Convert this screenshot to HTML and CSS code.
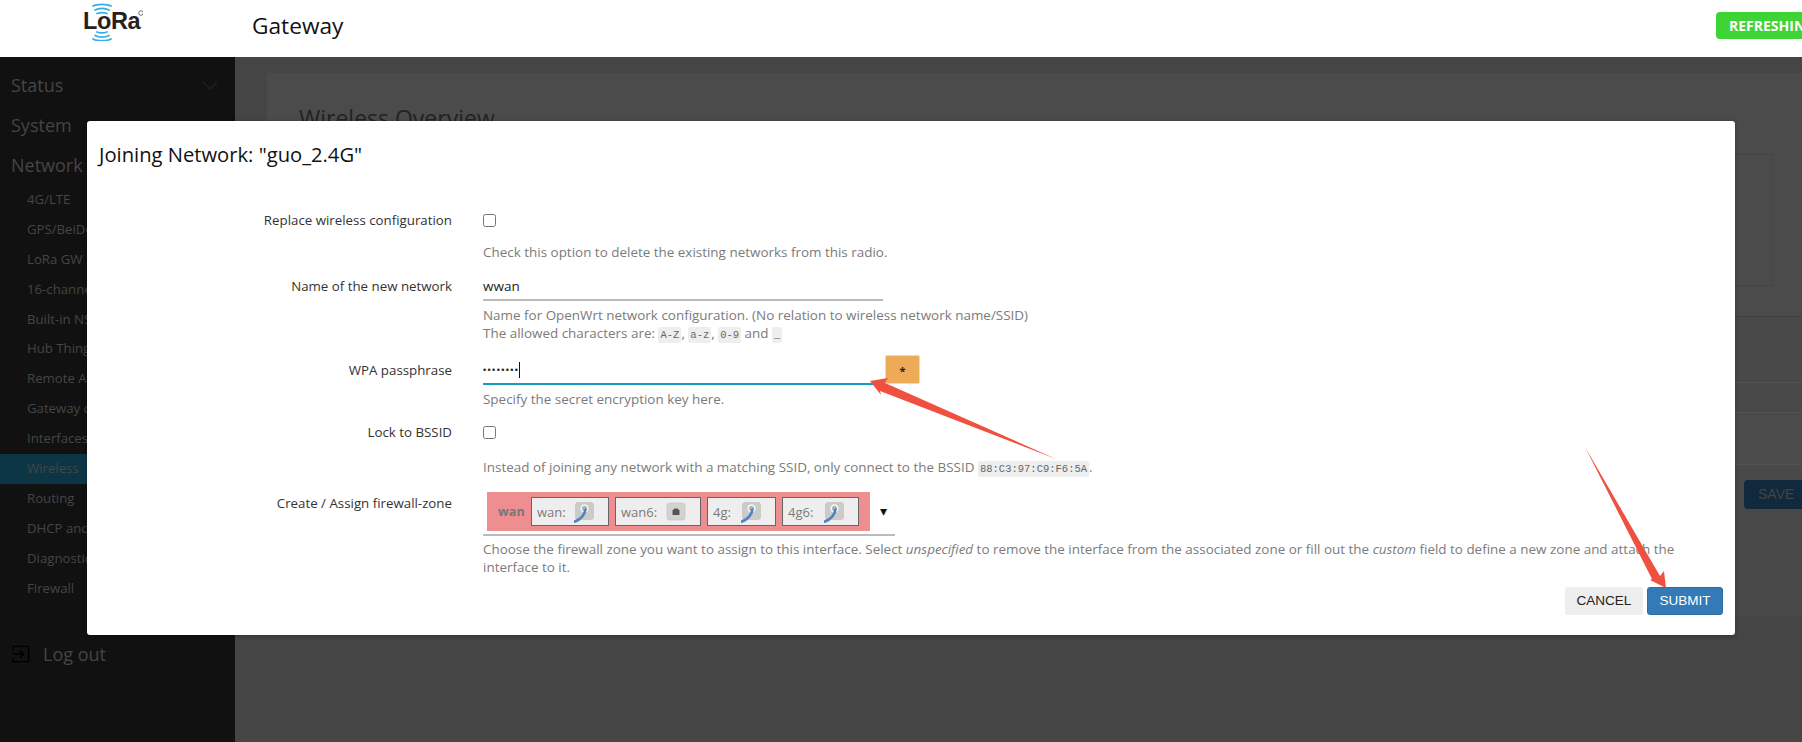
FILE: index.html
```html
<!DOCTYPE html>
<html lang="en">
<head>
<meta charset="utf-8">
<title>Gateway - Wireless</title>
<link rel="stylesheet" href="styles.css">
</head>
<body>
<svg class="defs" width="0" height="0" aria-hidden="true">
  <defs>
    <symbol id="wifi-icon" viewBox="0 0 20 21">
      <rect x="1.5" y=".5" width="18" height="17" rx="2.5" fill="#cbcbc9" stroke="#bdbdbb" stroke-width=".6"/>
      <circle cx="10.5" cy="6.5" r="3.4" fill="none" stroke="#f6f6f6" stroke-width="1.5"/>
      <circle cx="10.5" cy="6.5" r="1.6" fill="none" stroke="#8a8a8a" stroke-width=".8"/>
      <path d="M11.5 6.5C11.5 12 7 17.5 0 20" fill="none" stroke="#4d83c4" stroke-width="2.6"/>
    </symbol>
    <symbol id="eth-icon" viewBox="0 0 20 21">
      <rect x="1" y="1" width="18" height="17" rx="2.5" fill="#d2d2d0" stroke="#c4c4c2" stroke-width=".6"/>
      <path d="M6.5 13V8.5L8.5 6.5H11.5L13.5 8.5V13Z" fill="#555"/>
    </symbol>
  </defs>
</svg>

<header class="topbar">
  <div class="logo">
    <svg class="logo-waves" viewBox="0 0 60 38" width="60" height="38" aria-hidden="true">
      <g fill="none" stroke="#38aee8" stroke-width="1.8" stroke-linecap="round">
        <path d="M10 3C14 .7 24 .7 28 3"/>
        <path d="M12 7C16 5 22 5 26 7"/>
        <path d="M14 10.5C17 9.4 21 9.4 24 10.5"/>
        <path d="M14 29C17 30.1 21 30.1 24 29"/>
        <path d="M12 32.5C16 34.5 22 34.5 26 32.5"/>
        <path d="M10 36C14 38.3 24 38.3 28 36"/>
      </g>
      <circle cx="58" cy="10" r="2.3" fill="none" stroke="#666" stroke-width=".9"/>
    </svg>
    <span class="logo-text">LoRa</span>
  </div>
  <div class="brand">Gateway</div>
  <div class="refresh">REFRESHING</div>
</header>

<div class="shell">
  <nav class="sidebar">
    <div class="nav-head">Status
      <svg class="chev" viewBox="0 0 16 10" width="16" height="10" aria-hidden="true"><path d="M1 1L8 8L15 1" fill="none" stroke="#222" stroke-width="1.2"/></svg>
    </div>
    <div class="nav-head">System</div>
    <div class="nav-head">Network</div>
    <ul class="nav-list">
      <li class="nav-item">4G/LTE</li>
      <li class="nav-item">GPS/BeiDou</li>
      <li class="nav-item">LoRa GW</li>
      <li class="nav-item">16-channel</li>
      <li class="nav-item">Built-in NS</li>
      <li class="nav-item">Hub Things</li>
      <li class="nav-item">Remote Access</li>
      <li class="nav-item">Gateway config</li>
      <li class="nav-item">Interfaces</li>
      <li class="nav-item active">Wireless</li>
      <li class="nav-item">Routing</li>
      <li class="nav-item">DHCP and DNS</li>
      <li class="nav-item">Diagnostics</li>
      <li class="nav-item">Firewall</li>
    </ul>
    <div class="logout">
      <svg viewBox="0 0 20 20" width="18" height="18" aria-hidden="true"><path d="M1 1.5H18.5V18.5H1V14M1 6V1.5M1 10H13M9 6L13 10L9 14" fill="none" stroke="#000" stroke-width="1.6"/></svg>
      <span>Log out</span>
    </div>
  </nav>

  <main class="main">
    <section class="card">
      <h2 class="card-title">Wireless Overview</h2>
      <div class="card-box"></div>
    </section>
    <section class="lower">
      <div class="lower-row one"></div>
      <div class="lower-row two"></div>
      <div class="lower-row three"></div>
      <div class="save-row"><span class="save">SAVE</span></div>
    </section>
  </main>
</div>

<div class="modal">
  <h3 class="modal-title">Joining Network: "guo_2.4G"</h3>

  <div class="row r1">
    <div class="label">Replace wireless configuration</div>
    <div class="field">
      <div class="control"><span class="check"></span></div>
      <div class="help tall">Check this option to delete the existing networks from this radio.</div>
    </div>
  </div>

  <div class="row r2">
    <div class="label">Name of the new network</div>
    <div class="field">
      <div class="control text">wwan</div>
      <div class="help">Name for OpenWrt network configuration. (No relation to wireless network name/SSID)<br>The allowed characters are: <code>A-Z</code>, <code>a-z</code>, <code>0-9</code> and <code>_</code></div>
    </div>
  </div>

  <div class="row r3">
    <div class="label">WPA passphrase</div>
    <div class="field">
      <div class="pass-line">
        <div class="control text focus"><span class="dots">••••••••</span><span class="caret"></span></div>
        <span class="star">*</span>
      </div>
      <div class="help">Specify the secret encryption key here.</div>
    </div>
  </div>

  <div class="row r4">
    <div class="label">Lock to BSSID</div>
    <div class="field">
      <div class="control"><span class="check"></span></div>
      <div class="help tall">Instead of joining any network with a matching SSID, only connect to the BSSID <code>88:C3:97:C9:F6:5A</code>.</div>
    </div>
  </div>

  <div class="row r5">
    <div class="label">Create / Assign firewall-zone</div>
    <div class="field">
      <div class="zone-select">
        <div class="zone">
          <b class="zone-name">wan</b>
          <span class="iface w78">wan: <svg class="if-icon" aria-hidden="true"><use href="#wifi-icon"/></svg></span>
          <span class="iface w86">wan6: <svg class="if-icon" aria-hidden="true"><use href="#eth-icon"/></svg></span>
          <span class="iface w69">4g: <svg class="if-icon" aria-hidden="true"><use href="#wifi-icon"/></svg></span>
          <span class="iface w77">4g6: <svg class="if-icon" aria-hidden="true"><use href="#wifi-icon"/></svg></span>
        </div>
        <span class="drop">▾</span>
      </div>
      <div class="help zone-help">Choose the firewall zone you want to assign to this interface. Select <em>unspecified</em> to remove the interface from the associated zone or fill out the <em>custom</em> field to define a new zone and attach the interface to it.</div>
    </div>
  </div>

  <div class="modal-foot">
    <span class="btn cancel">CANCEL</span>
    <span class="btn submit">SUBMIT</span>
  </div>
</div>

<svg class="arrows" viewBox="0 0 1802 742" width="1802" height="742" aria-hidden="true">
  <polygon fill="#f0503f" points="1056,459 885,383 888,378 870,381 881,395 880,391"/>
  <polygon fill="#f0503f" points="1585,447 1660,576 1664,571 1666,588 1650,580 1652,579"/>
</svg>
</body>
</html>
```
FILE: styles.css
```css
* { box-sizing: border-box; }
html, body { margin: 0; height: 742px; overflow: hidden; }
body {
  font-family: "Open Sans", "Noto Sans", sans-serif;
  background: #454545;
  color: #222;
  position: relative;
}
.defs { position: absolute; }

/* Header */
.topbar {
  height: 57px;
  background: #fff;
  display: flex;
  align-items: center;
  padding-left: 83px;
  overflow: hidden;
}
.logo { position: relative; width: 169px; height: 57px; }
.logo-waves { position: absolute; left: 0; top: 3px; }
.logo-text {
  position: absolute;
  left: 0;
  top: 6px;
  font-family: "Liberation Sans", sans-serif;
  font-weight: 700;
  font-size: 23.5px;
  line-height: 30px;
  color: #2a1f1d;
  letter-spacing: -.4px;
}
.brand { font-size: 22.7px; color: #111; flex: 1; margin-top: -6px; }
.refresh {
  flex: none;
  width: 86px;
  height: 27px;
  margin-top: -6px;
  padding-left: 13px;
  background: #3fd435;
  border-radius: 4px 0 0 4px;
  color: #fff;
  font-weight: 700;
  font-size: 14px;
  line-height: 27px;
  white-space: nowrap;
  overflow: hidden;
}

/* Shell */
.shell { display: flex; height: 685px; }
.sidebar {
  width: 235px;
  flex: none;
  background: #111;
  color: #454545;
  padding-top: 8px;
}
.nav-head {
  height: 40px;
  line-height: 40px;
  padding-left: 11px;
  font-size: 18px;
  position: relative;
}
.chev { position: absolute; left: 202px; top: 16px; }
.nav-list { list-style: none; margin: 0; padding: 0; }
.nav-item {
  height: 29.9px;
  line-height: 29.9px;
  padding-left: 27px;
  font-size: 13.2px;
  white-space: nowrap;
}
.nav-item.active { background: #0c3546; }
.logout {
  display: flex;
  align-items: center;
  gap: 13px;
  margin-top: 39px;
  padding-left: 12px;
  font-size: 18px;
}

/* Dimmed page content */
.main { flex: 1; padding: 16px 0 0 32px; min-width: 0; }
.card { height: 243px; background: #4b4b4b; padding: 30px 29px 0 32px; }
.card-title { margin: 0; font-size: 23px; font-weight: 400; color: #222; line-height: 30px; white-space: nowrap; }
.card-box { margin-top: 21px; height: 132px; border: 1px solid #444; }
.lower { height: 300px; background: #484848; border-top: 1px solid #3f3f3f; }
.lower-row { border-bottom: 1px solid #525252; }
.lower-row.one { height: 66px; }
.lower-row.two { height: 30px; }
.lower-row.three { height: 52px; background: #4b4b4b; }
.save-row { display: flex; justify-content: flex-end; padding-top: 15px; }
.save {
  width: 58px;
  height: 29px;
  background: #10293d;
  color: #444;
  border-radius: 4px 0 0 4px;
  font-family: "Liberation Sans", sans-serif;
  font-size: 14px;
  line-height: 29px;
  padding-left: 14px;
}

/* Modal */
.modal {
  position: absolute;
  left: 87px;
  top: 121px;
  width: 1648px;
  height: 514px;
  background: #fff;
  border-radius: 3px;
  box-shadow: 0 1px 4px rgba(0,0,0,.3);
  padding-top: 16px;
}
.modal-title {
  margin: 0 0 0 12px;
  font-size: 20.2px;
  font-weight: 400;
  line-height: 34px;
  color: #111;
}
.row { display: grid; grid-template-columns: 365px 1218px; column-gap: 31px; }
.r1 { margin-top: 36px; }
.r2 { margin-top: 12px; }
.r3 { margin-top: 13px; }
.r4 { margin-top: 11px; }
.r5 { margin-top: 14px; }
.label {
  text-align: right;
  font-size: 13.3px;
  line-height: 26px;
  color: #333;
}
.r5 .label { line-height: 22px; }
.control { height: 26px; display: flex; align-items: center; font-size: 13.5px; color: #222; }
.control.text { width: 400px; height: 28px; border-bottom: 2px solid #bbb; }
.control.focus { width: 400px; border-bottom-color: #169ac8; }
.check {
  width: 13px;
  height: 13px;
  background: #fff;
  border: 1px solid #767676;
  border-radius: 2.5px;
}
.help { font-size: 13.45px; line-height: 18px; color: #7b7b7b; margin-top: 5px; }
.help.tall { margin-top: 10px; }
.r4 .help.tall { margin-top: 13px; }
.help.zone-help { margin-top: 4px; }
code {
  font-family: "Liberation Mono", monospace;
  font-size: 10.5px;
  background: #eee;
  color: #666;
  padding: 2px;
  border-radius: 2px;
}
.pass-line { display: flex; align-items: flex-start; }
.dots { font-size: 9px; letter-spacing: 1.4px; font-family: "Liberation Sans", sans-serif; color: #222; }
.caret { width: 1px; height: 16px; background: #111; margin-left: 0; }
.star {
  width: 35px;
  height: 29px;
  margin-top: -2px;
  margin-left: 2px;
  background: #edab57;
  border-radius: 2px;
  border: 1px solid #e4dccf;
  text-align: center;
  font-weight: 700;
  font-size: 11px;
  line-height: 30px;
  color: #222;
}
.zone-select {
  width: 412px;
  height: 44px;
  display: flex;
  padding-left: 4px;
  border-bottom: 2px solid #bbb;
}
.zone {
  width: 383px;
  height: 39px;
  background: #ee8e90;
  display: flex;
  align-items: center;
  padding-left: 11px;
  flex: none;
}
.zone-name { width: 33px; font-size: 12.6px; color: #777; font-weight: 700; flex: none; }
.iface {
  height: 29px;
  margin-right: 6px;
  background: #eee;
  border: 1px solid #666;
  font-size: 13px;
  color: #7b7b7b;
  display: flex;
  align-items: center;
  justify-content: space-between;
  padding: 0 14px 0 5px;
  flex: none;
}
.w78 { width: 78px; }
.w86 { width: 86px; }
.w69 { width: 69px; }
.w77 { width: 77px; }
.if-icon { width: 20px; height: 21px; flex: none; margin-top: 2px; }
.drop { margin: 9px 0 0 10px; font-size: 14px; line-height: 20px; color: #111; }
.modal-foot {
  display: flex;
  justify-content: flex-end;
  gap: 4px;
  margin: 11px 12px 0 0;
}
.btn {
  height: 28px;
  border-radius: 3px;
  font-family: "Liberation Sans", sans-serif;
  font-size: 13.5px;
  line-height: 28px;
  text-align: center;
}
.cancel { width: 78px; background: #eee; color: #222; }
.submit { width: 76px; background: #337ab7; color: #fff; border: 1px solid #2e6da4; line-height: 26px; }

/* Annotation arrows */
.arrows { position: absolute; left: 0; top: 0; pointer-events: none; }
```
